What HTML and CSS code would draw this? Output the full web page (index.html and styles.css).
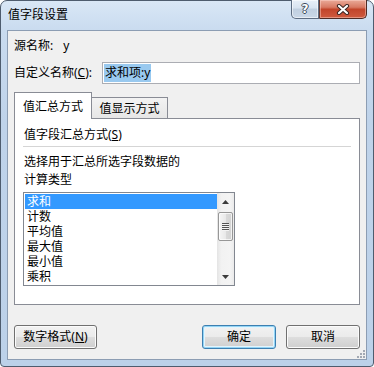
FILE: index.html
```html
<!DOCTYPE html>
<html lang="zh-CN">
<head>
<meta charset="utf-8">
<title>值字段设置</title>
<link rel="stylesheet" href="styles.css">
</head>
<body>
<div class="window">
  <div class="titlebar">
    <span class="title">值字段设置</span>
    <div class="caption">
      <div class="cbtn help"><span>?</span></div>
      <div class="cbtn close">
        <svg width="14" height="11" viewBox="0 0 14 11">
          <path d="M3 2 L11 9 M11 2 L3 9" stroke="#3b2623" stroke-width="4.2" stroke-linecap="round" fill="none"/>
          <path d="M3 2 L11 9 M11 2 L3 9" stroke="#ffffff" stroke-width="2.2" stroke-linecap="round" fill="none"/>
        </svg>
      </div>
    </div>
  </div>
  <div class="client">
    <div class="row src"><span>源名称:</span><span>y</span></div>
    <div class="row name">
      <span class="label">自定义名称(<u>C</u>):</span>
      <div class="input"><span class="sel">求和项:y</span></div>
    </div>
    <div class="tabs">
      <div class="tab active">值汇总方式</div>
      <div class="tab">值显示方式</div>
    </div>
    <div class="panel">
      <div class="group-label">值字段汇总方式(<u>S</u>)</div>
      <div class="sep"></div>
      <div class="desc">选择用于汇总所选字段数据的<br>计算类型</div>
      <div class="listbox">
        <ul class="items">
          <li class="selected">求和</li>
          <li>计数</li>
          <li>平均值</li>
          <li>最大值</li>
          <li>最小值</li>
          <li>乘积</li>
        </ul>
        <div class="scrollbar">
          <div class="sb-btn">
            <svg width="7" height="4" viewBox="0 0 7 4"><path d="M0 4 L3.5 0 L7 4 Z" fill="#3c3c3c"/></svg>
          </div>
          <div class="thumb">
            <span class="grip-line"></span><span class="grip-line"></span><span class="grip-line"></span><span class="grip-line"></span>
          </div>
          <div class="sb-space"></div>
          <div class="sb-btn">
            <svg width="7" height="4" viewBox="0 0 7 4"><path d="M0 0 L7 0 L3.5 4 Z" fill="#3c3c3c"/></svg>
          </div>
        </div>
      </div>
    </div>
    <div class="footer">
      <button class="btn wide">数字格式(<u>N</u>)</button>
      <div class="right">
        <button class="btn default">确定</button>
        <button class="btn">取消</button>
      </div>
    </div>
    <svg class="sizegrip" width="11" height="11" viewBox="0 0 11 11">
      <rect x="8" y="2" width="2" height="2" fill="#a3a9b3"/>
      <rect x="5" y="5" width="2" height="2" fill="#a3a9b3"/>
      <rect x="8" y="5" width="2" height="2" fill="#a3a9b3"/>
      <rect x="2" y="8" width="2" height="2" fill="#a3a9b3"/>
      <rect x="5" y="8" width="2" height="2" fill="#a3a9b3"/>
      <rect x="8" y="8" width="2" height="2" fill="#a3a9b3"/>
    </svg>
  </div>
</div>
</body>
</html>
```
FILE: styles.css
```css
html, body {
  margin: 0;
  padding: 0;
}
body {
  background: #ffffff;
  font-family: "Noto Sans", "Noto Sans CJK SC", sans-serif;
  font-size: 12px;
  line-height: 16px;
  color: #000000;
}
u {
  text-decoration: underline;
  text-underline-offset: 1px;
}

.window {
  width: 374px;
  height: 367px;
  box-sizing: border-box;
  border: 1px solid #4e5c6e;
  border-radius: 7px 7px 4px 4px;
  background: linear-gradient(#d9e7f6 0px, #c9dbef 30px, #bfd3ea 120px, #bcd1e9 100%);
  padding: 0 6px 6px;
  display: flex;
  flex-direction: column;
}

.titlebar {
  height: 29px;
  display: flex;
  align-items: flex-start;
}
.title {
  margin-top: 6px;
  margin-left: 1px;
  line-height: 16px;
  color: #000;
}
.caption {
  margin-left: auto;
  margin-top: -1px;
  display: flex;
}
.cbtn {
  height: 19px;
  box-sizing: border-box;
  display: flex;
  align-items: center;
  justify-content: center;
}
.cbtn.help {
  width: 28px;
  border: 1px solid #5d6d82;
  border-top: none;
  border-radius: 0 0 0 5px;
  background: linear-gradient(#e8eff8 0%, #d8e3f0 45%, #c0cfe0 50%, #cad8e8 100%);
  box-shadow: inset 0 0 0 1px rgba(255,255,255,0.55);
}
.cbtn.help span {
  font-family: "DejaVu Sans", sans-serif;
  font-weight: bold;
  font-size: 12px;
  line-height: 14px;
  color: #ffffff;
  text-shadow: 1px 0 0 #3d4a5c, -1px 0 0 #3d4a5c, 0 1px 0 #3d4a5c, 0 -1px 0 #3d4a5c;
}
.cbtn.close {
  width: 48px;
  border: 1px solid #4f2b25;
  border-left: 1px solid #6b3a31;
  border-top: none;
  border-radius: 0 0 5px 0;
  background: linear-gradient(#eaaa99 0%, #d87a64 40%, #c2452b 52%, #cf5a3f 100%);
  box-shadow: inset 0 0 0 1px rgba(255,220,210,0.45);
}

.client {
  flex: 1;
  position: relative;
  background: #f0f0f0;
  border: 1px solid #8c9db3;
  padding: 4px 6px 10px;
  display: flex;
  flex-direction: column;
}

.row {
  height: 22px;
  display: flex;
  align-items: center;
}
.row.src {
  gap: 10px;
}
.row.name {
  margin-top: 5px;
}
.label {
  width: 88px;
  flex: none;
}
.input {
  flex: 1;
  height: 22px;
  box-sizing: border-box;
  border: 1px solid #abadb3;
  background: #ffffff;
  display: flex;
  align-items: center;
  padding-left: 1px;
}
.sel {
  background: #99c9ef;
  line-height: 18px;
  padding: 0 1px;
}

.tabs {
  margin-top: 8px;
  height: 26px;
  display: flex;
  align-items: flex-end;
  position: relative;
  z-index: 1;
}
.tab {
  box-sizing: border-box;
  display: flex;
  align-items: center;
  justify-content: center;
}
.tab.active {
  width: 78px;
  height: 27px;
  margin-bottom: -1px;
  border: 1px solid #898c95;
  border-bottom: none;
  background: #ffffff;
  padding-top: 1px;
}
.tab:not(.active) {
  width: 76px;
  height: 21px;
  border: 1px solid #898c95;
  border-left: none;
  border-bottom: none;
  background: linear-gradient(#f3f3f3, #e6e6e6);
  padding-top: 2px;
}

.panel {
  height: 187px;
  box-sizing: border-box;
  border: 1px solid #898c95;
  background: #ffffff;
  padding: 0 8px;
  display: flex;
  flex-direction: column;
}
.group-label {
  margin-top: 8px;
  padding-left: 1px;
}
.sep {
  margin-top: 3px;
  height: 1px;
  background: #d5d5d5;
}
.desc {
  margin-top: 6px;
  line-height: 18px;
  padding-left: 1px;
}
.listbox {
  margin-top: 3px;
  width: 212px;
  height: 94px;
  box-sizing: border-box;
  border: 1px solid #828790;
  background: #ffffff;
  display: flex;
}
.items {
  list-style: none;
  margin: 0;
  padding: 1px 0 0 1px;
  flex: 1;
  overflow: hidden;
}
.items li {
  height: 15px;
  line-height: 15px;
  padding-left: 2px;
}
.items li.selected {
  background: #3399ff;
  color: #ffffff;
}
.scrollbar {
  width: 17px;
  flex: none;
  display: flex;
  flex-direction: column;
  background: linear-gradient(to right, #e4e4e4 0%, #f2f2f2 25%, #f4f4f4 75%, #ebebeb 100%);
}
.sb-btn {
  height: 17px;
  display: flex;
  align-items: center;
  justify-content: center;
}
.thumb {
  margin: 2px 1px 0;
  height: 29px;
  box-sizing: border-box;
  border: 1px solid #979797;
  border-radius: 2px;
  background: linear-gradient(to right, #f6f6f6 0%, #e9e9e9 50%, #dadada 51%, #d2d2d2 100%);
  box-shadow: inset 0 0 0 1px rgba(255,255,255,0.7);
  display: flex;
  flex-direction: column;
  align-items: center;
  justify-content: center;
  gap: 1px;
}
.grip-line {
  width: 7px;
  height: 1px;
  background: #555555;
  box-shadow: 0 1px 0 #f4f4f4;
}
.sb-space {
  flex: 1;
}

.footer {
  margin-top: 20px;
  display: flex;
  justify-content: space-between;
}
.right {
  display: flex;
  gap: 10px;
}
.btn {
  height: 24px;
  width: 74px;
  box-sizing: border-box;
  border: 1px solid #707070;
  border-radius: 3px;
  background: linear-gradient(#f2f2f2 0%, #ebebeb 48%, #dddddd 52%, #cfcfcf 100%);
  box-shadow: inset 0 0 0 1px #fbfbfb;
  font-family: inherit;
  font-size: 12px;
  line-height: 16px;
  color: #000000;
  padding: 0;
}
.btn.wide {
  width: 83px;
}
.btn.default {
  border-color: #3c7fb1;
  box-shadow: inset 0 0 0 1px #94d5f5, inset 0 0 0 2px #e4f4fc;
}

.sizegrip {
  position: absolute;
  right: 0;
  bottom: 0;
}
```
